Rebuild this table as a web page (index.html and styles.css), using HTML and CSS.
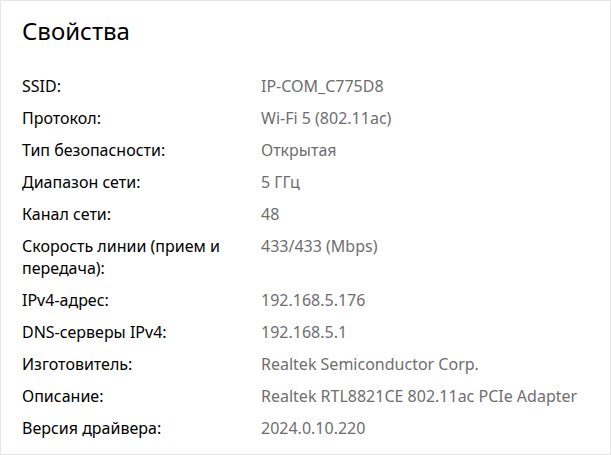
FILE: index.html
```html
<!DOCTYPE html>
<html lang="ru">
<head>
<meta charset="utf-8">
<link rel="stylesheet" href="styles.css">
</head>
<body>
<div class="panel">
  <h1 class="title">Свойства</h1>
  <dl class="props">
    <dt>SSID:</dt><dd>IP-COM_C775D8</dd>
    <dt>Протокол:</dt><dd>Wi-Fi 5 (802.11ac)</dd>
    <dt>Тип безопасности:</dt><dd>Открытая</dd>
    <dt>Диапазон сети:</dt><dd>5 ГГц</dd>
    <dt>Канал сети:</dt><dd>48</dd>
    <dt>Скорость линии (прием и передача):</dt><dd>433/433 (Mbps)</dd>
    <dt>IPv4-адрес:</dt><dd>192.168.5.176</dd>
    <dt>DNS-серверы IPv4:</dt><dd>192.168.5.1</dd>
    <dt>Изготовитель:</dt><dd>Realtek Semiconductor Corp.</dd>
    <dt>Описание:</dt><dd>Realtek RTL8821CE 802.11ac PCIe Adapter</dd>
    <dt>Версия драйвера:</dt><dd>2024.0.10.220</dd>
  </dl>
</div>
</body>
</html>
```
FILE: styles.css
```css
html, body {
  margin: 0;
  padding: 0;
  background: #fff;
}
.panel {
  box-sizing: border-box;
  width: 611px;
  height: 455px;
  border: 1px solid #e6e6e6;
  padding: 14px 20px 0 21px;
  font-family: "Segoe UI", "Noto Sans", sans-serif;
  color: #000;
  overflow: hidden;
}
.title {
  margin: 0 0 28px 0;
  font-size: 24px;
  line-height: 32px;
  font-weight: 400;
}
.props {
  margin: 0;
  display: grid;
  grid-template-columns: 216px 1fr;
  column-gap: 23px;
  row-gap: 10px;
  font-size: 16px;
  line-height: 22px;
}
.props dt {
  margin: 0;
}
.props dd {
  margin: 0;
  color: #6e6e6e;
}
```
